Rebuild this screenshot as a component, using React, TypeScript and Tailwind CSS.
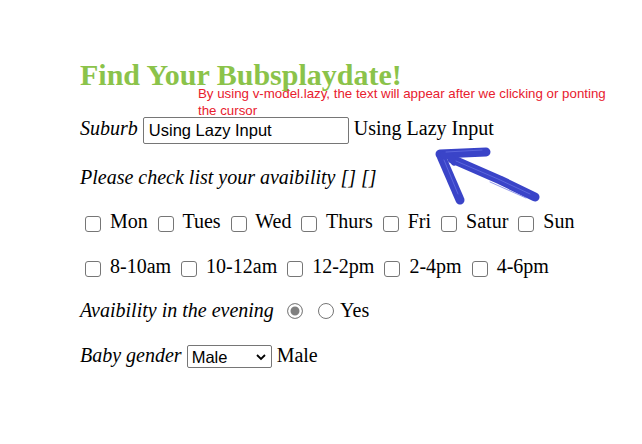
import type { ReactNode } from "react";

const days = ["Mon", "Tues", "Wed", "Thurs", "Fri", "Satur", "Sun"];
const slots = ["8-10am", "10-12am", "12-2pm", "2-4pm", "4-6pm"];

function Box() {
  return (
    <span className="inline-block h-[16px] w-[16px] ml-[5px] mr-[4px] rounded-[3px] border border-[#767676] bg-white align-[-4px]" />
  );
}

function Radio({ checked = false }: { checked?: boolean }) {
  return (
    <span
      className={`inline-block h-[16px] w-[16px] ml-[8px] mr-[2px] rounded-full border align-[-2px] ${
        checked
          ? "border-[#8a8a8a] bg-[#7f7f7f] shadow-[inset_0_0_0_2.5px_white]"
          : "border-[#767676] bg-white"
      }`}
    />
  );
}

function Row({ children }: { children: ReactNode }) {
  return <p className="h-[23px] leading-[23px] whitespace-nowrap">{children}</p>;
}

export default function App() {
  return (
    <div className="relative min-h-[444px] bg-white pl-[80px] pt-[58px] font-['Liberation_Serif',serif] text-[20px] text-black">
      <h2 className="text-[30px] font-bold leading-[34px] text-[#8bc34a]">
        Find Your Bubsplaydate!
      </h2>

      <p className="mt-[-6px] ml-[118px] w-[416px] font-['Liberation_Sans',sans-serif] text-[13.3px] leading-[16.5px] text-[#e8202e]">
        By using v-model.lazy, the text will appear after we clicking or ponting the cursor
      </p>

      <div className="mt-[-2px] flex flex-col gap-[21.5px]">
        <Row>
          <i>Suburb</i>{" "}
          <input
            readOnly
            value="Using Lazy Input"
            className="h-[27px] w-[206px] rounded-[2px] border border-[#767676] px-[5px] align-middle font-['Liberation_Sans',sans-serif] text-[16.5px] text-black outline-none"
          />{" "}
          Using Lazy Input
        </Row>

        <div className="mt-[4px]">
          <Row>
            <i>Please check list your avaibility [] []</i>
          </Row>
        </div>

        <Row>
          {days.map((day, index) => (
            <span key={day}>
              <Box /> {day}
              {index < days.length - 1 ? " " : ""}
            </span>
          ))}
        </Row>

        <Row>
          {slots.map((slot, index) => (
            <span key={slot}>
              <Box /> {slot}
              {index < slots.length - 1 ? " " : ""}
            </span>
          ))}
        </Row>

        <Row>
          <i>Avaibility in the evening</i> <Radio checked /> <Radio /> Yes
        </Row>

        <Row>
          <i>Baby gender</i>{" "}
          <span className="inline-flex h-[23px] w-[85px] items-center justify-between rounded-[2px] border border-[#767676] pl-[4px] pr-[4px] align-middle font-['Liberation_Sans',sans-serif] text-[16.5px] leading-none">
            Male
            <svg width="12" height="12" viewBox="0 0 12 12">
              <path
                d="M2 4l4 4 4-4"
                fill="none"
                stroke="#000"
                strokeWidth="1.8"
              />
            </svg>
          </span>{" "}
          Male
        </Row>
      </div>

      {/* hand-drawn marker arrow */}
      <svg
        className="absolute left-[430px] top-[142px]"
        width="115"
        height="70"
        viewBox="0 0 115 70"
      >
        <g
          fill="none"
          stroke="#3a44c8"
          strokeLinecap="round"
          strokeLinejoin="round"
          strokeWidth="9"
        >
          <path d="M105 55 L70 38 L22 17" />
          <path d="M10 12 L56 10" />
          <path d="M11 14 L30 58" />
          <path d="M14 13 Q20 12 24 20" strokeWidth="7" />
        </g>
        <g
          fill="none"
          stroke="#6a74e6"
          strokeLinecap="round"
          strokeWidth="1"
          opacity="0.7"
        >
          <path d="M100 52 L68 37 L26 19" />
          <path d="M16 10 L52 8" />
          <path d="M14 18 L28 52" />
          <path d="M96 56 L60 40" />
        </g>
      </svg>
    </div>
  );
}
